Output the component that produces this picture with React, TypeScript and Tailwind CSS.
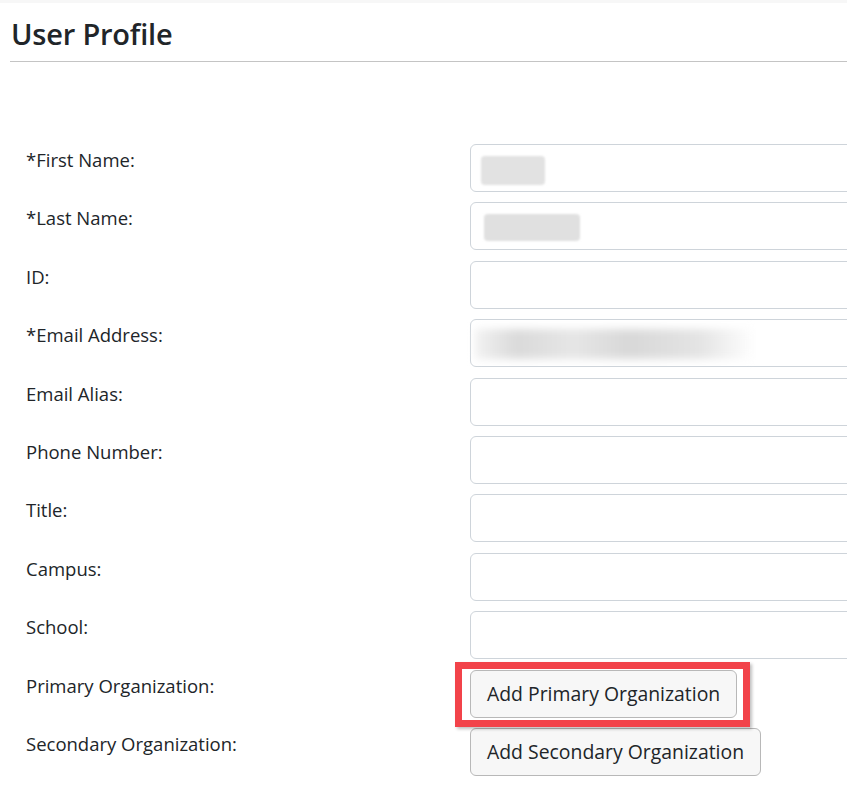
import React from 'react';

type Field = {
  label: string;
  blur?: 'first' | 'last' | 'email';
};

const fields: Field[] = [
  { label: '*First Name:', blur: 'first' },
  { label: '*Last Name:', blur: 'last' },
  { label: 'ID:' },
  { label: '*Email Address:', blur: 'email' },
  { label: 'Email Alias:' },
  { label: 'Phone Number:' },
  { label: 'Title:' },
  { label: 'Campus:' },
  { label: 'School:' },
];

const BlurredValue: React.FC<{ kind: Field['blur'] }> = ({ kind }) => {
  if (kind === 'first') {
    return <div className="absolute left-[10px] top-[11px] h-[29px] w-[64px] rounded-sm bg-[#e2e2e2] blur-[1px]" />;
  }
  if (kind === 'last') {
    return <div className="absolute left-[13px] top-[11px] h-[27px] w-[96px] rounded-sm bg-[#e0e0e0] blur-[1px]" />;
  }
  if (kind === 'email') {
    return (
      <div className="absolute left-[4px] top-[9px] h-[30px] w-[280px] bg-[linear-gradient(90deg,#f2f2f2_0%,#dadada_15%,#e6e6e6_35%,#d8d8d8_55%,#e4e4e4_80%,#ffffff_100%)] blur-[4px]" />
    );
  }
  return null;
};

const labelCls = 'w-[444px] shrink-0 pt-[2px] text-[18.5px] leading-[28px]';
const buttonCls =
  'h-[48px] rounded-[6px] border border-[#b8b8b8] bg-[#f7f7f7] px-[16px] text-[19.4px] text-[#212529]';

const App: React.FC = () => {
  return (
    <div className="min-h-[786px] w-[847px] overflow-hidden bg-white text-[#212529] font-['Open_Sans',sans-serif]">
      <div className="h-[3px] bg-[#f7f7f7]" />
      <div className="pl-[10px]">
        <h1 className="pt-[12px] pb-[8px] pl-[1px] text-[29px] leading-[38px] font-semibold tracking-[-0.2px]">User Profile</h1>
        <div className="h-px bg-[#c4c4c4]" />

        <div className="mt-[82px] flex flex-col gap-[10.4px] pl-[16px]">
          {fields.map((f) => (
            <div key={f.label} className="flex">
              <label className={labelCls}>{f.label}</label>
              <div className="relative h-[48px] w-[500px] shrink-0 rounded-[6px] border border-[#ced4da] bg-white">
                <BlurredValue kind={f.blur} />
              </div>
            </div>
          ))}

          <div className="flex">
            <label className={labelCls}>Primary Organization:</label>
            <div className="relative">
              <button className={buttonCls}>Add Primary Organization</button>
              <div className="pointer-events-none absolute -left-[15px] -top-[8px] -right-[13px] -bottom-[9px] border-[7px] border-[#f2434a] shadow-[2px_2px_3px_rgba(0,0,0,0.25)]" />
            </div>
          </div>

          <div className="flex">
            <label className={labelCls}>Secondary Organization:</label>
            <button className={buttonCls}>Add Secondary Organization</button>
          </div>
        </div>
      </div>
    </div>
  );
};

export default App;
